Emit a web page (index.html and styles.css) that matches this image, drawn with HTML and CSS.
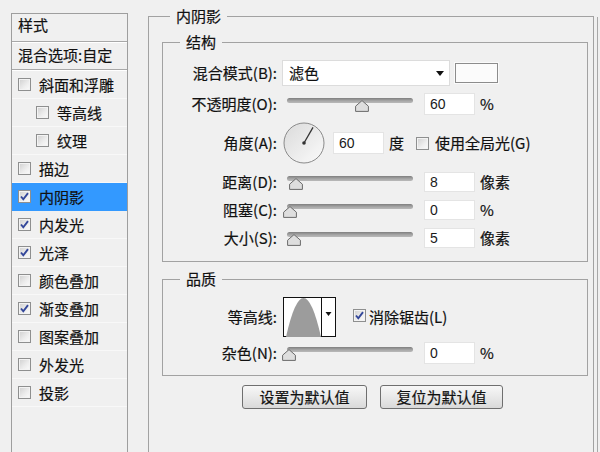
FILE: index.html
```html
<!DOCTYPE html>
<html lang="zh-CN">
<head>
<meta charset="utf-8">
<title>图层样式 - 内阴影</title>
<link rel="stylesheet" href="styles.css">
</head>
<body>
<div class="dialog">
  <aside class="styles-list">
    <div class="list-head">样式</div>
    <div class="list-blend">混合选项:自定</div>
    <ul class="fx">
      <li class="fx-item"><span class="cb"></span>斜面和浮雕</li>
      <li class="fx-item sub"><span class="cb"></span>等高线</li>
      <li class="fx-item sub"><span class="cb"></span>纹理</li>
      <li class="fx-item"><span class="cb"></span>描边</li>
      <li class="fx-item active"><span class="cb"><svg class="chk" viewBox="0 0 11 11"><path d="M2 5.5 L4.3 8.3 L9 2.2"/></svg></span>内阴影</li>
      <li class="fx-item"><span class="cb"><svg class="chk" viewBox="0 0 11 11"><path d="M2 5.5 L4.3 8.3 L9 2.2"/></svg></span>内发光</li>
      <li class="fx-item"><span class="cb"><svg class="chk" viewBox="0 0 11 11"><path d="M2 5.5 L4.3 8.3 L9 2.2"/></svg></span>光泽</li>
      <li class="fx-item"><span class="cb"></span>颜色叠加</li>
      <li class="fx-item"><span class="cb"><svg class="chk" viewBox="0 0 11 11"><path d="M2 5.5 L4.3 8.3 L9 2.2"/></svg></span>渐变叠加</li>
      <li class="fx-item"><span class="cb"></span>图案叠加</li>
      <li class="fx-item"><span class="cb"></span>外发光</li>
      <li class="fx-item"><span class="cb"></span>投影</li>
    </ul>
  </aside>

  <fieldset class="group outer">
    <legend class="legend-outer">内阴影</legend>

    <fieldset class="group inner structure">
      <legend class="legend-inner">结构</legend>

      <div class="row r1">
        <span class="lbl">混合模式(B):</span>
        <div class="select"><span>滤色</span><span class="arrow"></span></div>
        <span class="swatch"></span>
      </div>

      <div class="row r2">
        <span class="lbl">不透明度(O):</span>
        <div class="slider"><div class="track"></div><svg class="thumb" style="left:68px" viewBox="0 0 14 12"><path d="M7 0.6 L13.4 6.2 L13.4 11.4 L0.6 11.4 L0.6 6.2 Z"/></svg></div>
        <span class="num">60</span>
        <span class="unit">%</span>
      </div>

      <div class="row r3">
        <span class="lbl">角度(A):</span>
        <svg class="dial" width="42" height="42" viewBox="0 0 42 42">
          <defs>
            <linearGradient id="dialfill" x1="0" y1="0" x2="1" y2="1">
              <stop offset="0" stop-color="#dadada"/>
              <stop offset="1" stop-color="#fbfbfb"/>
            </linearGradient>
          </defs>
          <circle cx="21" cy="21" r="20" fill="url(#dialfill)" stroke="#8a8a8a"/>
          <line x1="21" y1="21" x2="30" y2="5.4" stroke="#333" stroke-width="1.3"/>
          <circle cx="21" cy="21" r="1.8" fill="#333"/>
        </svg>
        <span class="num num-angle">60</span>
        <span class="unit">度</span>
        <span class="cb cb-global"></span>
        <span class="cb-text">使用全局光(G)</span>
      </div>

      <div class="row r4">
        <span class="lbl">距离(D):</span>
        <div class="slider"><div class="track"></div><svg class="thumb" style="left:2px" viewBox="0 0 14 12"><path d="M7 0.6 L13.4 6.2 L13.4 11.4 L0.6 11.4 L0.6 6.2 Z"/></svg></div>
        <span class="num small">8</span>
        <span class="unit">像素</span>
      </div>

      <div class="row r5">
        <span class="lbl">阻塞(C):</span>
        <div class="slider"><div class="track"></div><svg class="thumb" style="left:-4px" viewBox="0 0 14 12"><path d="M7 0.6 L13.4 6.2 L13.4 11.4 L0.6 11.4 L0.6 6.2 Z"/></svg></div>
        <span class="num small">0</span>
        <span class="unit">%</span>
      </div>

      <div class="row r6">
        <span class="lbl">大小(S):</span>
        <div class="slider"><div class="track"></div><svg class="thumb" style="left:0px" viewBox="0 0 14 12"><path d="M7 0.6 L13.4 6.2 L13.4 11.4 L0.6 11.4 L0.6 6.2 Z"/></svg></div>
        <span class="num small">5</span>
        <span class="unit">像素</span>
      </div>
    </fieldset>

    <fieldset class="group inner quality">
      <legend class="legend-inner">品质</legend>

      <div class="row q1">
        <span class="lbl">等高线:</span>
        <svg class="contour" width="53" height="40" viewBox="0 0 53 40">
          <rect x="0.5" y="0.5" width="52" height="39" fill="#fff" stroke="#111"/>
          <path d="M3 40 Q20.5 -38 38 40 Z" fill="#9c9c9c"/>
          <line x1="38.5" y1="0" x2="38.5" y2="40" stroke="#111"/>
          <path d="M42.5 15 L48.5 15 L45.5 19 Z" fill="#111"/>
        </svg>
        <span class="cb cb-aa"><svg class="chk" viewBox="0 0 11 11"><path d="M2 5.5 L4.3 8.3 L9 2.2"/></svg></span>
        <span class="cb-text">消除锯齿(L)</span>
      </div>

      <div class="row q2">
        <span class="lbl">杂色(N):</span>
        <div class="slider"><div class="track"></div><svg class="thumb" style="left:-5px" viewBox="0 0 14 12"><path d="M7 0.6 L13.4 6.2 L13.4 11.4 L0.6 11.4 L0.6 6.2 Z"/></svg></div>
        <span class="num">0</span>
        <span class="unit">%</span>
      </div>
    </fieldset>

    <div class="buttons">
      <button class="btn btn-set">设置为默认值</button>
      <button class="btn btn-reset">复位为默认值</button>
    </div>
  </fieldset>

  <div class="edge"></div>
</div>
</body>
</html>
```

FILE: styles.css
```css
* {
  box-sizing: border-box;
}

html,
body {
  margin: 0;
  padding: 0;
}

body {
  width: 600px;
  height: 452px;
  overflow: hidden;
  background: #f0f0f0;
  color: #111;
  font-family: "Noto Sans CJK SC", "Noto Sans", sans-serif;
  font-size: 15px;
  line-height: 20px;
  -webkit-text-stroke: 0.2px #111;
}

.dialog {
  display: flex;
  align-items: flex-start;
  height: 452px;
}

/* ---------- left list ---------- */
.styles-list {
  flex: none;
  width: 117px;
  height: 460px;
  margin: 13px 0 0 11px;
  border: 1px solid #9e9e9e;
  border-bottom: none;
}

.list-head {
  height: 28px;
  padding: 1px 0 0 6px;
  border-bottom: 1px solid #a8a8a8;
}

.list-blend {
  height: 28px;
  padding: 2px 0 0 6px;
  border-top: 1px solid #fff;
  border-bottom: 1px solid #a8a8a8;
}

.fx {
  list-style: none;
  margin: 0;
  padding: 0;
  border-top: 1px solid #fff;
}

.fx-item {
  display: flex;
  align-items: center;
  height: 28px;
  padding-left: 6px;
  border-bottom: 1px solid #f8f8f8;
}

.fx-item.sub {
  padding-left: 24px;
}

.fx-item .cb {
  margin-right: 8px;
}

.fx-item.active {
  background: #3399ff;
  border-bottom-color: #3399ff;
}

/* ---------- checkbox ---------- */
.cb {
  flex: none;
  display: inline-flex;
  align-items: center;
  justify-content: center;
  width: 13px;
  height: 13px;
  border: 1px solid #8e8f8f;
  background: linear-gradient(135deg, #cfcfcf 0%, #eeeeee 60%, #fbfbfb 100%);
  box-shadow: inset 0 0 0 1px #f3f3f3;
}

.chk {
  width: 11px;
  height: 11px;
}

.chk path {
  fill: none;
  stroke: #33479a;
  stroke-width: 1.9;
}

/* ---------- group boxes ---------- */
.group {
  margin: 0;
  min-width: 0;
  border: 1px solid #a2a2a2;
}

.group legend {
  padding: 0 6px;
  line-height: 20px;
  font-size: 15px;
}

.outer {
  flex: none;
  width: 446px;
  height: 470px;
  margin: 6px 0 0 20px;
  padding: 6px 5px 0 13px;
  border-bottom: none;
}

.legend-outer {
  margin-left: 8px;
}

.inner {
  padding: 0;
}

.legend-inner {
  margin-left: 17px;
}

.structure {
  padding: 7px 0 9px 0;
}

.quality {
  margin-top: 7px;
  padding: 8px 0 8px 0;
}

.edge {
  flex: none;
  width: 1px;
  height: 440px;
  margin: 17px 0 0 3px;
  background: #a8a8a8;
}

/* ---------- rows ---------- */
.row {
  display: flex;
  align-items: center;
  height: 28px;
}

.r2,
.r4 {
  margin-top: 3px;
}

.r3 {
  height: 44px;
  margin-top: 3px;
}

.q1 {
  height: 40px;
}

.q2 {
  margin-top: 2px;
}

.lbl {
  flex: none;
  width: 114px;
  text-align: right;
  white-space: nowrap;
}

/* select + swatch */
.select {
  flex: none;
  display: flex;
  align-items: center;
  justify-content: space-between;
  width: 168px;
  height: 26px;
  margin-left: 5px;
  padding: 0 5px 0 6px;
  background: #fff;
  border: 1px solid #dcdcdc;
}

.arrow {
  width: 0;
  height: 0;
  margin-top: 1px;
  border-left: 4px solid transparent;
  border-right: 4px solid transparent;
  border-top: 5px solid #111;
}

.swatch {
  flex: none;
  width: 43px;
  height: 20px;
  margin-left: 5px;
  background: #fbfbfb;
  border: 1px solid #8c8c8c;
  box-shadow: 0 0 0 1px #fafafa;
}

/* slider */
.slider {
  position: relative;
  flex: none;
  width: 126px;
  height: 16px;
  margin-left: 10px;
}

.track {
  height: 5px;
  margin-top: 2px;
  border-radius: 3px;
  background: linear-gradient(#7f7f7f, #a9a9a9 60%, #b9b9b9);
}

.thumb {
  position: absolute;
  top: 4px;
  width: 14px;
  height: 12px;
}

.thumb path {
  fill: #dedede;
  stroke: #6a6a6a;
  stroke-width: 1;
}

/* numeric fields */
.num {
  flex: none;
  width: 51px;
  height: 22px;
  margin-left: 11px;
  padding-left: 5px;
  background: #fff;
  border: 1px solid #e4e4e4;
  font-family: "Liberation Sans", Arial, sans-serif;
  font-size: 14px;
  line-height: 20px;
  color: #1a1a1a;
  -webkit-text-stroke: 0;
}

.num.small {
  height: 20px;
  line-height: 18px;
}

.unit {
  flex: none;
  margin-left: 5px;
}

.dial {
  flex: none;
  margin-left: 6px;
}

.num-angle {
  margin-left: 8px;
}

.cb-global {
  margin-left: 12px;
}

.cb-text {
  margin-left: 6px;
  white-space: nowrap;
}

.contour {
  flex: none;
  margin-left: 6px;
}

.cb-aa {
  margin-left: 17px;
  margin-top: -4px;
}

.q1 .cb-text {
  margin-left: 3px;
}

/* buttons */
.buttons {
  display: flex;
  gap: 13px;
  margin-top: 9px;
  padding-left: 80px;
}

.btn {
  height: 24px;
  padding: 0;
  border: 1px solid #6f6f6f;
  border-radius: 3px;
  background: linear-gradient(#f7f7f7, #e9e9e9 50%, #d9d9d9);
  font-family: "Noto Sans CJK SC", sans-serif;
  font-size: 15px;
  line-height: 22px;
  color: #111;
  -webkit-text-stroke: 0.2px #111;
}

.btn-set {
  width: 125px;
}

.btn-reset {
  width: 123px;
}
```
